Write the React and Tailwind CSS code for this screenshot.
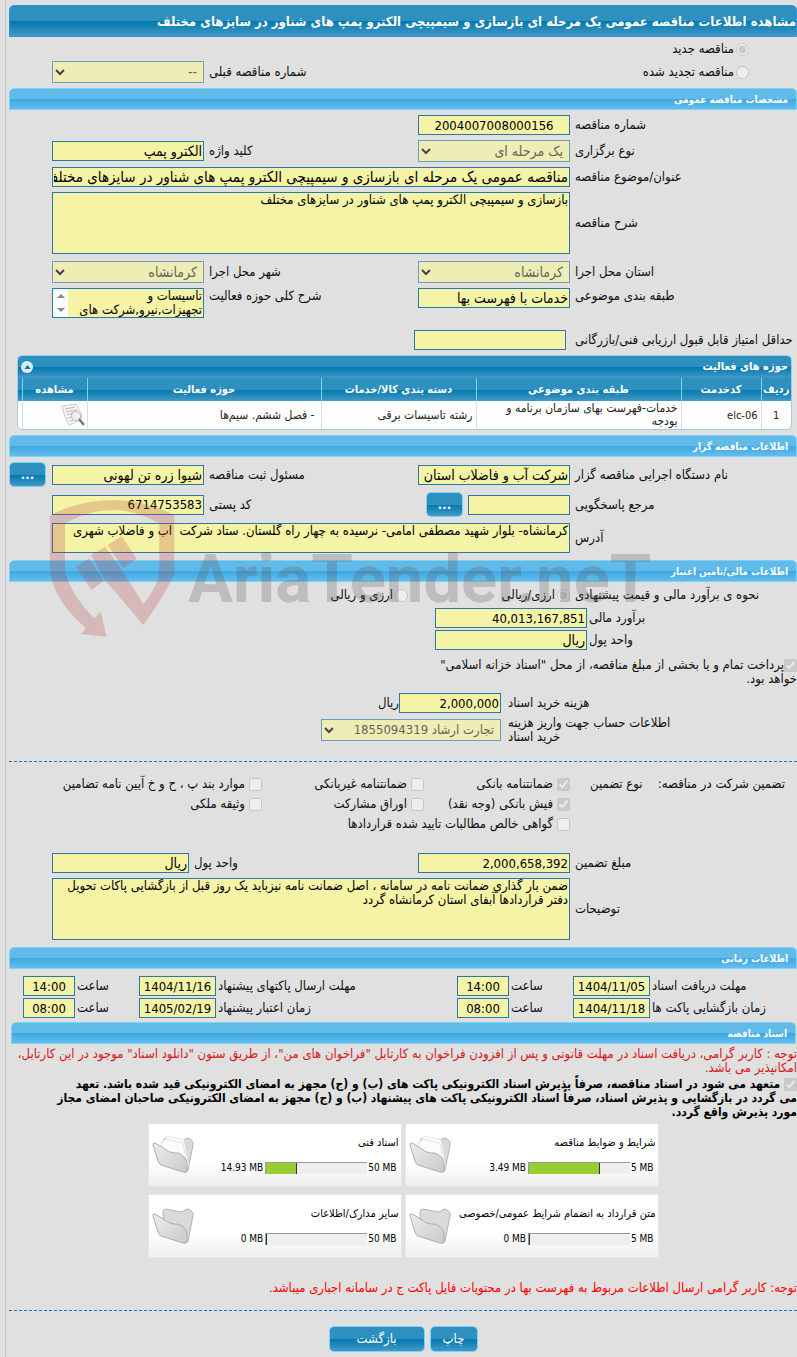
import React from "react";

const fieldBox = "block w-full border border-[#2a78a8] bg-[#f5f3a5] text-black";
const areaClass = `${fieldBox} resize-none overflow-hidden px-px leading-[14px]`;
const gridClass = "grid grid-cols-[222fr_152fr_204fr_152fr_38px] gap-x-[5px]";
const darkFill = "bg-[linear-gradient(#2e90be_50%,#0078ae_50%,#4599c5)]";

function SectionBar({ children, className = "" }) {
  return (
    <h2
      className={`h-[22px] rounded-t-[5px] border border-[#77d5f7] bg-[linear-gradient(#62bae9_50%,#3aa8e3_50%,#66bcec)] px-2 text-[10px] leading-[22px] font-bold text-white ${className}`}
    >
      {children}
    </h2>
  );
}

function Label({ htmlFor, children, className = "" }) {
  return (
    <label htmlFor={htmlFor} className={`min-w-0 text-left whitespace-nowrap ${className}`}>
      {children}
    </label>
  );
}

// Numbers are set smaller than Persian words
function TextField({ id, value = "", textSize = "text-[14px]", className = "" }) {
  return (
    <input
      id={id}
      type="text"
      readOnly
      value={value}
      className={`${fieldBox} h-5 px-px leading-[18px] ${textSize} ${className}`}
    />
  );
}

function NumberField({ className = "", ...props }) {
  return <TextField textSize="text-[13px]" className={className} {...props} />;
}

function SelectField({ id, value, textSize = "text-[14px]", className = "" }) {
  return (
    <div className={`relative ${className}`}>
      <select
        id={id}
        disabled
        className={`block h-[22px] w-full appearance-none border border-[#6a9fbb] bg-[#efedb6] pr-[6px] pl-5 leading-5 text-[#66645a] ${textSize}`}
      >
        <option>{value}</option>
      </select>
      <svg
        viewBox="0 0 10 7"
        className="pointer-events-none absolute top-[8px] left-[3px] h-[7px] w-[10px]"
        fill="none"
        stroke="#444"
        strokeWidth="2"
      >
        <path d="M1 1 L5 5 L9 1" />
      </svg>
    </div>
  );
}

function Choice({ type = "checkbox", name, checked = false, children, className = "" }) {
  return (
    <label
      className={`flex items-center whitespace-nowrap ${type === "radio" ? "gap-[2px]" : "gap-1"} ${className}`}
    >
      <input type={type} name={name} disabled defaultChecked={checked} className="m-0 h-[13px] w-[13px] shrink-0" />
      <span>{children}</span>
    </label>
  );
}

function BlueButton({ children, className = "", ...props }) {
  return (
    <button
      type="button"
      className={`rounded-[5px] border border-[#77d5f7] text-white ${darkFill} ${className}`}
      {...props}
    >
      {children}
    </button>
  );
}

function Folder({ full }) {
  return (
    <svg viewBox="0 0 42 38" className="h-[38px] w-[42px] shrink-0">
      <defs>
        <linearGradient id="folderFront" x1="0" y1="0" x2="1" y2="1">
          <stop offset="0" stopColor="#ececec" />
          <stop offset="1" stopColor="#cacaca" />
        </linearGradient>
      </defs>
      <path
        d="M11 6 Q11 2 14 2 L29 5 Q31 5 33 3 L36 2 Q38 2 41 6 L41 9 L36 34 Q35 37 32 36 L13 27 Z"
        fill="#dadada"
        stroke="#b4b4b4"
      />
      {full && (
        <g fill="#fbfbfb" stroke="#dadada" strokeWidth="0.7">
          <path d="M9 7 L16 0 L32 4 L37 30 L12 22 Z" />
          <path d="M9 8 L13 3 L31 7 L35 31 L12 24 Z" />
        </g>
      )}
      <path
        d="M1 9 Q0 7 3 7 L10 11 Q17 17 22 17 Q27 16 31 20 Q35 23 35 27 L35 34 Q34 37 31 36 L9 29 Q7 28 6 25 Z"
        fill="url(#folderFront)"
        stroke="#adadad"
      />
    </svg>
  );
}

function DocCard({ title, limit, used, percent, full }) {
  return (
    <div className="flex h-16 items-center border border-[#e6e6e6] bg-[linear-gradient(#fff_60%,#efefef)] pr-[2px] pl-[3px] text-black">
      <div className="min-w-0 flex-1">
        <div className="text-[11px] leading-4 whitespace-nowrap">{title}</div>
        <div className="mt-[9px] flex items-center gap-px text-[10px] leading-4">
          <span dir="ltr" className="pr-[2px]">{limit}</span>
          <div
            dir="ltr"
            role="progressbar"
            aria-label={title}
            aria-valuenow={percent}
            className="h-[12px] w-[102px] border-t border-l border-[#999] bg-[#eee]"
          >
            <div className="h-full border-r border-[#333] bg-[#9acd32]" style={{ width: `${percent}%` }} />
          </div>
          <span dir="ltr" className="pr-px">{used}</span>
        </div>
      </div>
      <Folder full={full} />
    </div>
  );
}

function Watermark() {
  return (
    <div aria-hidden="true" className="pointer-events-none absolute top-[497px] left-[50px]">
      <svg viewBox="0 0 600 142" className="h-[142px] w-[600px]">
        <g transform="translate(-50 -67) scale(0.3333)" fill="#b93a3a" fillOpacity="0.24">
          <path d="M150 255 Q340 165 523 255 L523 430 Q505 480 430 585 L315 450 L273 375 L316 350 L365 420 L430 522 Q478 465 478 410 L478 280 Q340 200 195 280 L195 410 Q200 480 283 565 L302 545 L320 620 L243 612 L257 595 Q150 500 150 410 Z" />
          <path d="M227 410 L268 385 L311 452 L275 480 Z" />
          <path d="M323 345 L365 318 L410 387 L370 415 Z" />
        </g>
        <text
          direction="ltr"
          x="138"
          y="105"
          fontFamily="Roboto, sans-serif"
          fontWeight="700"
          fontSize="67"
          fill="#555"
          fillOpacity="0.25"
        >
          AriaTender.neT
        </text>
      </svg>
    </div>
  );
}

const columns = ["ردیف", "کدخدمت", "طبقه بندی موضوعی", "دسته بندی کالا/خدمات", "حوزه فعالیت", "مشاهده"];

function ActivityTable() {
  return (
    <div className="mt-[5px] mr-[5px] ml-2 overflow-hidden rounded-[5px] border border-[#a6c9e2] bg-white">
      <div className={`flex h-[22px] items-center justify-between px-[3px] text-[11px] font-bold text-white ${darkFill}`}>
        <span>حوزه های فعالیت</span>
        <button type="button" aria-label="بستن جدول" className="flex h-3 w-3 items-center justify-center rounded-full bg-[#dcebf7]">
          <svg viewBox="0 0 8 5" className="h-[4px] w-[7px]">
            <path d="M0 5 L4 0 L8 5 Z" fill="#0078ae" />
          </svg>
        </button>
      </div>
      <table className="w-full table-fixed border-collapse">
        <colgroup>
          <col className="w-[30px]" />
          <col className="w-[80px]" />
          <col className="w-[205px]" />
          <col className="w-[155px]" />
          <col />
          <col className="w-[65px]" />
          <col className="w-[4px]" />
        </colgroup>
        <thead>
          <tr className={`h-[23px] text-white ${darkFill}`}>
            {columns.map((name) => (
              <th key={name} className="border-l border-[#77d5f7] p-0 text-[11px] leading-4 font-bold whitespace-nowrap">
                {name}
              </th>
            ))}
            <td />
          </tr>
        </thead>
        <tbody className="text-[12px] leading-[13px] text-[#222]">
          <tr className="h-7">
            <td className="border-l border-[#ddd] text-center text-[11px]">1</td>
            <td className="border-l border-[#ddd] px-[3px] text-[11px]"><span dir="ltr">elc-06</span></td>
            <td className="border-l border-[#ddd] px-[3px]">
              خدمات-فهرست بهای سازمان برنامه و<br />بودجه
            </td>
            <td className="border-l border-[#ddd] px-[3px]">رشته تاسیسات برقی</td>
            <td className="border-l border-[#ddd] px-[6px]">- فصل ششم. سیم‌ها</td>
            <td className="border-l border-[#ddd] px-[2px]">
              <button type="button" aria-label="مشاهده" className="block">
                <svg viewBox="0 0 24 24" className="h-6 w-6">
                  <path d="M1 3 L15 1 Q18 6 21 12 L20 17 L8 22 Q3 14 1 3 Z" fill="#f4f4f4" stroke="#cdcdcd" />
                  <path d="M4 6 L14 4 M5 9 L16 7 M6 12 L12 10 M7 15 L11 14 M9 18 L13 17" stroke="#bbb" fill="none" />
                  <circle cx="15" cy="13" r="4.5" fill="#eef1f2" stroke="#bbb" strokeWidth="1.2" />
                  <path d="M18 16 L23 22" stroke="#777" strokeWidth="2.5" />
                </svg>
              </button>
            </td>
            <td />
          </tr>
        </tbody>
      </table>
    </div>
  );
}

const dates = [
  [
    { id: "docs", label: "مهلت دریافت اسناد", date: "1404/11/05", time: "14:00" },
    { id: "send", label: "مهلت ارسال پاکتهای پیشنهاد", date: "1404/11/16", time: "14:00" },
  ],
  [
    { id: "open", label: "زمان بازگشایی پاکت ها", date: "1404/11/18", time: "08:00" },
    { id: "valid", label: "زمان اعتبار پیشنهاد", date: "1405/02/19", time: "08:00" },
  ],
];

const docs = [
  { title: "شرایط و ضوابط مناقصه", limit: "5 MB", used: "3.49 MB", percent: 70, full: true },
  { title: "اسناد فنی", limit: "50 MB", used: "14.93 MB", percent: 30, full: true },
  { title: "متن قرارداد به انضمام شرایط عمومی/خصوصی", limit: "5 MB", used: "0 MB", percent: 1, full: false },
  { title: "سایر مدارک/اطلاعات", limit: "50 MB", used: "0 MB", percent: 1, full: false },
];

function App() {
  return (
    <div
      dir="rtl"
      className="relative overflow-hidden bg-[#e0e0e0] pl-[5px] font-['Tahoma','DejaVu_Sans_Condensed','DejaVu_Sans',sans-serif] text-[13px] leading-[14px] text-[#111]"
    >
      <div className="border-l border-[#c6c6c6] pt-[5px] pb-[5px] pl-[3px]">
        <h1 className={`h-8 overflow-hidden rounded-t-[5px] border border-[#2f96e0] text-[13px] leading-8 font-bold whitespace-nowrap text-white ${darkFill}`}>
          مشاهده اطلاعات مناقصه عمومی یک مرحله ای بازسازی و سیمپیچی الکترو پمپ های شناور در سایزهای مختلف
        </h1>

        <Choice type="radio" name="kind" checked className="mt-[5px] pr-12">مناقصه جدید</Choice>
        <div className={`${gridClass} mt-[5px] items-center`}>
          <Choice type="radio" name="kind" className="col-span-2 pr-12">مناقصه تجدید شده</Choice>
          <Label htmlFor="prev">شماره مناقصه قبلی</Label>
          <SelectField id="prev" value="--" />
        </div>

        <SectionBar className="mt-[5px]">مشخصات مناقصه عمومی</SectionBar>
        <div className={`${gridClass} mt-[5px] items-center`}>
          <Label htmlFor="number">شماره مناقصه</Label>
          <NumberField id="number" value="2004007008000156" className="text-center" />
        </div>
        <div className={`${gridClass} mt-[5px] items-center`}>
          <Label htmlFor="type">نوع برگزاری</Label>
          <SelectField id="type" value="یک مرحله ای" />
          <Label htmlFor="keyword">کلید واژه</Label>
          <TextField id="keyword" value="الکترو پمپ" />
        </div>
        <div className={`${gridClass} mt-[5px] items-center`}>
          <Label htmlFor="title">عنوان/موضوع مناقصه</Label>
          <TextField
            id="title"
            value="مناقصه عمومی یک مرحله ای بازسازی و سیمپیچی الکترو پمپ های شناور در سایزهای مختلف"
            textSize="text-[15px]"
            className="col-span-3"
          />
        </div>
        <div className={`${gridClass} mt-[5px] items-center`}>
          <Label htmlFor="desc">شرح مناقصه</Label>
          <textarea
            id="desc"
            readOnly
            value="بازسازی و سیمپیچی الکترو پمپ های شناور در سایزهای مختلف"
            className={`${areaClass} col-span-3 h-[62px]`}
          />
        </div>
        <div className={`${gridClass} mt-[7px] items-center`}>
          <Label htmlFor="province">استان محل اجرا</Label>
          <SelectField id="province" value="کرمانشاه" />
          <Label htmlFor="city">شهر محل اجرا</Label>
          <SelectField id="city" value="کرمانشاه" />
        </div>
        <div className={`${gridClass} mt-[5px] items-start`}>
          <Label htmlFor="category" className="leading-4">طبقه بندی موضوعی</Label>
          <TextField id="category" value="خدمات با فهرست بها" />
          <Label htmlFor="field" className="leading-4">شرح کلی حوزه فعالیت</Label>
          <div className="relative">
            <textarea
              id="field"
              readOnly
              value={"تاسیسات و\nتجهیزات,نیرو,شرکت های"}
              className={`${areaClass} h-[30px]`}
            />
            <div className="absolute top-px bottom-px left-px flex w-[15px] flex-col items-center justify-between bg-[#fafafa] py-[5px]">
              <svg viewBox="0 0 8 4" className="h-1 w-2"><path d="M0 4 L4 0 L8 4 Z" fill="#888" /></svg>
              <svg viewBox="0 0 8 4" className="h-1 w-2"><path d="M0 0 L4 4 L8 0 Z" fill="#888" /></svg>
            </div>
          </div>
        </div>
        <div className="mt-3 flex items-center gap-[9px]">
          <Label htmlFor="score" className="w-[222px]">حداقل امتیاز قابل قبول ارزیابی فنی/بازرگانی</Label>
          <div className="w-[152px]"><TextField id="score" /></div>
        </div>

        <ActivityTable />

        <SectionBar className="mt-[5px]">اطلاعات مناقصه گزار</SectionBar>
        <div className={`${gridClass} mt-[5px] items-center`}>
          <Label htmlFor="agency">نام دستگاه اجرایی مناقصه گزار</Label>
          <TextField id="agency" value="شرکت آب و فاضلاب استان" />
          <Label htmlFor="officer">مسئول ثبت مناقصه</Label>
          <TextField id="officer" value="شیوا زره تن لهونی" />
          <BlueButton className="h-[25px] w-[37px] justify-self-end font-bold" aria-label="مسئول ثبت">...</BlueButton>
        </div>
        <div className={`${gridClass} mt-[5px] items-center`}>
          <Label htmlFor="contact">مرجع پاسخگویی</Label>
          <div className="flex items-center gap-[5px]">
            <TextField id="contact" className="min-w-0 flex-1" />
            <BlueButton className="ml-[8px] h-[25px] w-[37px] font-bold" aria-label="مرجع پاسخگویی">...</BlueButton>
          </div>
          <Label htmlFor="postal">کد پستی</Label>
          <NumberField id="postal" value="6714753583" />
        </div>
        <div className={`${gridClass} mt-[6px] items-center`}>
          <Label htmlFor="address">آدرس</Label>
          <textarea
            id="address"
            readOnly
            value="کرمانشاه- بلوار شهید مصطفی امامی- نرسیده به چهار راه گلستان. ستاد شرکت  آب و فاضلاب شهری"
            className={`${areaClass} col-span-3 h-[30px]`}
          />
        </div>

        <SectionBar className="mt-[7px]">اطلاعات مالی/تامین اعتبار</SectionBar>
        <div role="radiogroup" aria-labelledby="method" className={`${gridClass} mt-[6px] items-center`}>
          <span id="method" className="text-left whitespace-nowrap">نحوه ی برآورد مالی و قیمت پیشنهادی</span>
          <Choice type="radio" name="currency" checked>ارزی/ریالی</Choice>
          <Choice type="radio" name="currency" className="px-[5px]">ارزی و ریالی</Choice>
        </div>
        <div className="mt-[6px] flex items-center gap-[2px]">
          <Label htmlFor="estimate" className="w-[208px]">برآورد مالی</Label>
          <div className="w-[152px]"><NumberField id="estimate" value="40,013,167,851" /></div>
        </div>
        <div className="mt-[2px] flex items-center gap-[2px]">
          <Label htmlFor="unit" className="w-[208px]">واحد پول</Label>
          <div className="w-[152px]"><TextField id="unit" value="ریال" /></div>
        </div>
        <label className="mt-2 block">
          <input type="checkbox" disabled defaultChecked className="m-0 h-[13px] w-[13px] align-middle" />
          پرداخت تمام و یا بخشی از مبلغ مناقصه، از محل "اسناد خزانه اسلامی"
          <br />
          خواهد بود.
        </label>
        <div className="mt-[7px] flex items-center">
          <Label htmlFor="fee" className="ml-[7px] w-[289px]">هزینه خرید اسناد</Label>
          <div className="w-[102px]"><NumberField id="fee" value="2,000,000" /></div>
          <span>ریال</span>
        </div>
        <div className="mt-[3px] flex items-center">
          <Label htmlFor="account" className="ml-[7px] w-[289px]">
            اطلاعات حساب جهت واریز هزینه<br />خرید اسناد
          </Label>
          <SelectField id="account" value="تجارت ارشاد 1855094319" textSize="text-[13px]" className="w-[180px]" />
        </div>

        <hr className="mt-[17px] border-t border-dashed border-[#2a78a8]" />
        <div className="mt-3 grid grid-cols-[227fr_146fr_162fr_253fr] items-center">
          <div className="flex h-5 items-center justify-between pr-3 pl-5 whitespace-nowrap">
            <span>تضمین شرکت در مناقصه:</span>
            <span>نوع تضمین</span>
          </div>
          <Choice checked>ضمانتنامه بانکی</Choice>
          <Choice>ضمانتنامه غیربانکی</Choice>
          <Choice>موارد بند پ ، ح و خ آیین نامه تضامین</Choice>
          <Choice checked className="col-start-2 h-5">فیش بانکی (وجه نقد)</Choice>
          <Choice>اوراق مشارکت</Choice>
          <Choice>وثیقه ملکی</Choice>
          <Choice className="col-span-2 col-start-2 h-5">گواهی خالص مطالبات تایید شده قراردادها</Choice>
        </div>
        <div className="mt-[19px] grid grid-cols-[222fr_152fr_219fr_137fr_38px] items-center gap-x-[5px]">
          <Label htmlFor="guarantee">مبلغ تضمین</Label>
          <NumberField id="guarantee" value="2,000,658,392" />
          <Label htmlFor="unit2">واحد پول</Label>
          <TextField id="unit2" value="ریال" />
        </div>
        <div className={`${gridClass} mt-[5px] items-center`}>
          <Label htmlFor="notes">توضیحات</Label>
          <textarea
            id="notes"
            readOnly
            value={"ضمن بار گذاري ضمانت نامه در سامانه ، اصل ضمانت نامه نیزباید یک روز قبل از بازگشایی پاکات تحویل\nدفتر قراردادها آبفای استان کرمانشاه گردد"}
            className={`${areaClass} col-span-3 h-[62px]`}
          />
        </div>

        <SectionBar className="mt-[7px]">اطلاعات زمانی</SectionBar>
        <div className="mt-[7px] flex flex-col gap-[2px]">
          {dates.map((row) => (
            <div
              key={row[0].id}
              className="grid grid-cols-[145fr_77fr_60fr_52fr_237fr_77fr_60fr_52fr_12px] items-center gap-x-[2px]"
            >
              {row.map((item) => (
                <React.Fragment key={item.id}>
                  <Label htmlFor={item.id}>{item.label}</Label>
                  <NumberField id={item.id} value={item.date} className="text-center" />
                  <Label htmlFor={`${item.id}-time`}>ساعت</Label>
                  <NumberField id={`${item.id}-time`} value={item.time} className="text-center" />
                </React.Fragment>
              ))}
            </div>
          ))}
        </div>

        <SectionBar className="mt-1 mr-px ml-[2px]">اسناد مناقصه</SectionBar>
        <p className="mt-[3px] text-[#d8171b]">
          توجه : کاربر گرامی، دریافت اسناد در مهلت قانونی و پس از افزودن فراخوان به کارتابل "فراخوان های من"، از طریق ستون "دانلود اسناد" موجود در این کارتابل،
          <br />
          امکانپذیر می باشد.
        </p>
        <label className="mt-[2px] block text-[12px] font-bold text-black">
          <input type="checkbox" disabled defaultChecked className="m-0 h-[13px] w-[13px] align-middle" />{" "}
          متعهد می شود در اسناد مناقصه، صرفاً پذیرش اسناد الکترونیکی پاکت های (ب) و (ج) مجهز به امضای الکترونیکی قید شده باشد. تعهد
          <br />
          می گردد در بازگشایی و پذیرش اسناد، صرفاً اسناد الکترونیکی پاکت های پیشنهاد (ب) و (ج) مجهز به امضای الکترونیکی صاحبان امضای مجاز
          <br />
          مورد پذیرش واقع گردد.
        </label>

        <div className="mx-auto mt-1 grid max-w-[511px] grid-cols-2 gap-x-[3px] gap-y-[7px]">
          {docs.map((doc) => (
            <DocCard key={doc.title} {...doc} />
          ))}
        </div>

        <p className="mt-[22px] leading-4 text-[#f00]">
          توجه: کاربر گرامی ارسال اطلاعات مربوط به فهرست بها در محتویات فایل پاکت ج در سامانه اجباری میباشد.
        </p>
        <hr className="mt-[14px] border-t border-dashed border-[#2a78a8]" />
        <div className="mt-[15px] flex justify-center gap-[5px]">
          <BlueButton className="h-[26px] w-12">چاپ</BlueButton>
          <BlueButton className="h-[26px] w-24">بازگشت</BlueButton>
        </div>
      </div>
      <Watermark />
    </div>
  );
}

export default App;
